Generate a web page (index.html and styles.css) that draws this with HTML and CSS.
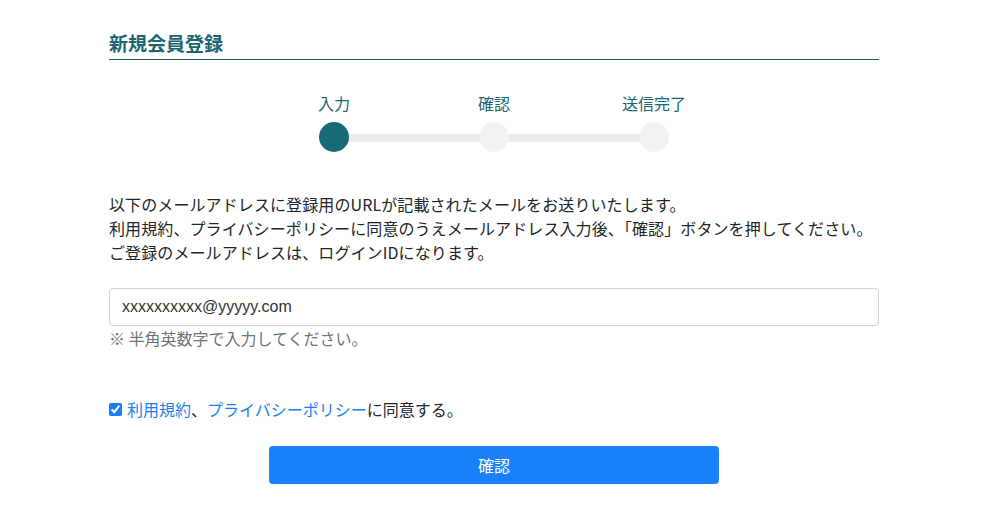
FILE: index.html
```html
<!DOCTYPE html>
<html lang="ja">
<head>
<meta charset="UTF-8">
<meta name="viewport" content="width=device-width,initial-scale=1">
<title>新規会員登録</title>
<link rel="stylesheet" href="styles.css">
</head>
<body>

<div class="page">
  <h1 class="title">新規会員登録</h1>

  <ol class="steps">
    <li class="step done"><span class="label">入力</span><span class="dot"></span></li>
    <li class="step"><span class="label">確認</span><span class="dot"></span></li>
    <li class="step"><span class="label">送信完了</span><span class="dot"></span></li>
  </ol>

  <p class="lead">
    以下のメールアドレスに登録用のURLが記載されたメールをお送りいたします。<br>
    利用規約、プライバシーポリシーに同意のうえメールアドレス入力後、「確認」ボタンを押してください。<br>
    ご登録のメールアドレスは、ログインIDになります。
  </p>

  <form class="form">
    <input class="field" type="email" value="xxxxxxxxxx@yyyyy.com">
    <div class="hint">※ 半角英数字で入力してください。</div>

    <label class="agree">
      <input type="checkbox" checked>
      <span><a href="#">利用規約</a>、<a href="#">プライバシーポリシー</a>に同意する。</span>
    </label>

    <button class="submit" type="button">確認</button>
  </form>
</div>

</body>
</html>
```

FILE: styles.css
```css
html,body { margin:0; padding:0; background:#fff; }
body { font-family:"Noto Sans CJK JP","Noto Sans",sans-serif; font-size:16px; color:#212529; }

.page { width:770px; margin:0 0 0 109px; }

.title { margin:29px 0 0; padding-bottom:2px; font-size:19px; line-height:28px; font-weight:700; color:#1b6672; border-bottom:1px solid #1b5560; }

.steps { list-style:none; margin:31px auto 0; padding:0; width:480px; display:flex; }
.step { flex:1; display:flex; flex-direction:column; align-items:center; gap:7px; position:relative; }
.step .label { line-height:24px; color:#1b6672; }
.step .dot { width:30px; height:30px; border-radius:50%; background:#f2f2f2; position:relative; z-index:1; }
.step.done .dot { background:#176a77; }
.step:not(:last-child)::after { content:""; position:absolute; left:50%; width:100%; top:43px; height:8px; background:#e9ecef; }

.lead { margin:40px 0 0; line-height:24px; letter-spacing:0.1px; }

.form { margin-top:24px; display:flex; flex-direction:column; }
.field { box-sizing:border-box; width:100%; height:38px; padding:0 12px; border:1px solid #ced4da; border-radius:4px; font-family:"Liberation Sans","Noto Sans CJK JP",sans-serif; font-size:16px; color:#333; }
.hint { line-height:24px; color:#6c757d; }

.agree { margin-top:47px; display:flex; align-items:center; gap:5px; line-height:24px; }
.agree input { margin:0; width:13px; height:13px; accent-color:#1a7ef5; }
.agree a { color:#1a7ef5; text-decoration:none; }

.submit { margin:25px auto 0; width:450px; height:38px; border:0; border-radius:4px; background:#1a80fb; color:#fff; font-family:"Noto Sans CJK JP",sans-serif; font-size:16px; cursor:pointer; }
```
